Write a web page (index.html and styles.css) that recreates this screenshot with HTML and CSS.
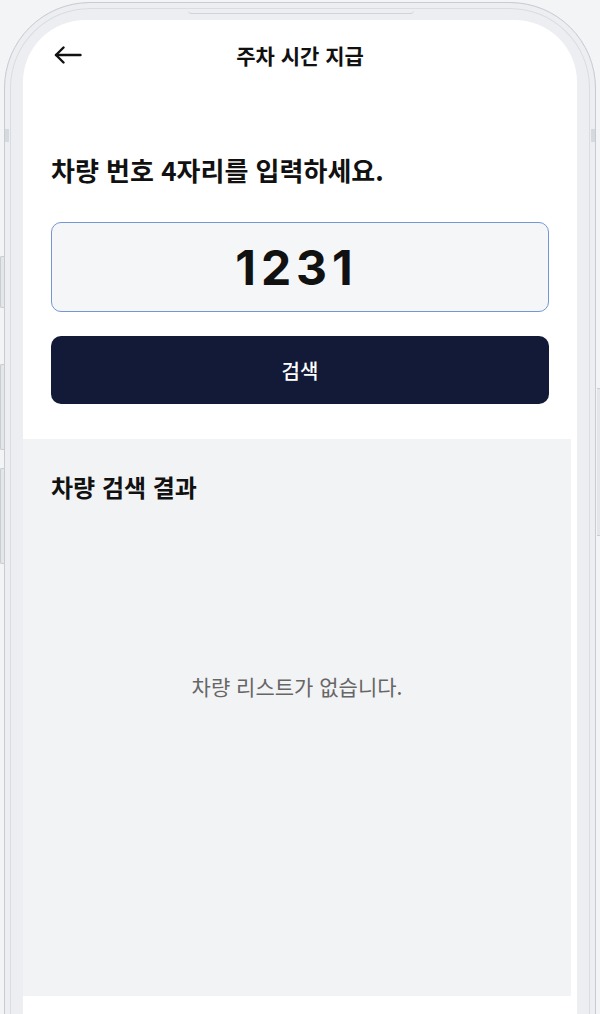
FILE: index.html
```html
<!DOCTYPE html>
<html lang="ko">
<head>
<meta charset="UTF-8" />
<meta name="viewport" content="width=device-width, initial-scale=1" />
<title>주차 시간 지급</title>
<link rel="stylesheet" href="styles.css">
</head>
<body>

<div class="phone">
  <!-- frame details -->
  <span class="notch"></span>
  <span class="side-btn left b1"></span>
  <span class="side-btn left b2"></span>
  <span class="side-btn left b3"></span>
  <span class="side-btn right b4"></span>
  <span class="antenna left"></span>
  <span class="antenna right"></span>

  <div class="screen">
    <header class="top-bar">
      <button class="back-btn" aria-label="뒤로">
        <svg width="28" height="18" viewBox="0 0 28 18" fill="none" stroke="#111" stroke-width="2.4" stroke-linecap="round" stroke-linejoin="round">
          <path d="M26.5 9H2" />
          <path d="M9.5 1.5L2 9l7.5 7.5" />
        </svg>
      </button>
      <h1 class="title">주차 시간 지급</h1>
      <span></span>
    </header>

    <section class="search">
      <h2 class="search-label">차량 번호 4자리를 입력하세요.</h2>
      <input class="plate-input" type="text" value="1231" maxlength="4" />
      <button class="search-btn">검색</button>
    </section>

    <section class="results">
      <h3 class="results-title">차량 검색 결과</h3>
      <p class="empty">차량 리스트가 없습니다.</p>
    </section>
  </div>
</div>

</body>
</html>
```

FILE: styles.css
```css
* {
  box-sizing: border-box;
}
body {
  margin: 0;
  padding: 0;
  background: #f3f4f6;
  font-family: "Noto Sans CJK KR", "Noto Sans", sans-serif;
  color: #111;
  overflow: hidden;
}

/* Phone frame */
.phone {
  position: relative;
  margin: 2px 4px 0;
  height: 1100px;
  padding: 17px 18px 0;
  background: #eceef1;
  border: 1.5px solid #c8cbd0;
  border-radius: 86px;
  box-shadow: inset 0 0 0 5px #eceef1, inset 0 0 0 6px #d9dce0;
}
.notch {
  position: absolute;
  top: 7px;
  left: 183px;
  width: 226px;
  height: 4px;
  border-bottom: 1px solid #cfd2d7;
  border-radius: 0 0 12px 12px;
}
.side-btn {
  position: absolute;
  width: 4px;
  background: #e4e6e9;
  border: 1px solid #c9ccd1;
}
.side-btn.left {
  left: -5.5px;
  border-right: none;
  border-radius: 2px 0 0 2px;
}
.side-btn.right {
  right: -5.5px;
  border-left: none;
  border-radius: 0 2px 2px 0;
}
.b1 { top: 253px; height: 52px; }
.b2 { top: 361px; height: 86px; }
.b3 { top: 465px; height: 96px; }
.b4 { top: 385px; height: 148px; }
.antenna {
  position: absolute;
  top: 126px;
  width: 4px;
  height: 13px;
  background: #d6d9dd;
}
.antenna.left { left: 0; }
.antenna.right { right: 0; }

/* Screen */
.screen {
  height: 1060px;
  background: #fff;
  border-radius: 62px;
  overflow: hidden;
}

.top-bar {
  display: grid;
  grid-template-columns: 1fr auto 1fr;
  align-items: center;
  height: 70px;
  padding: 0 31px;
}
.back-btn {
  justify-self: start;
  display: flex;
  padding: 0;
  border: none;
  background: none;
  cursor: pointer;
}
.title {
  margin: 0;
  font-size: 21px;
  font-weight: 700;
  line-height: 1;
}

/* Search form */
.search {
  display: flex;
  flex-direction: column;
  padding: 63px 28px 35px;
}
.search-label {
  margin: 0;
  font-size: 26px;
  font-weight: 700;
  line-height: 34px;
}
.plate-input {
  margin-top: 35px;
  height: 90px;
  width: 100%;
  padding: 0 7px 0 0;
  border: 1px solid #7596d3;
  border-radius: 10px;
  background: #f5f6f8;
  text-align: center;
  font-family: Inter, "Noto Sans", sans-serif;
  font-size: 48px;
  font-weight: 700;
  letter-spacing: 5px;
  color: #111;
  outline: none;
}
.search-btn {
  margin-top: 24px;
  height: 68px;
  border: none;
  border-radius: 10px;
  background: #121a38;
  color: #fff;
  font-family: inherit;
  font-size: 20px;
  font-weight: 500;
  cursor: pointer;
}

/* Results */
.results {
  height: 557px;
  margin-right: 6px;
  padding: 32px 28px 0;
  background: #f2f3f5;
}
.results-title {
  margin: 0;
  font-size: 24px;
  font-weight: 700;
  line-height: 31px;
}
.empty {
  margin: 170px 0 0;
  text-align: center;
  font-size: 21px;
  line-height: 28px;
  color: #666;
}
```
